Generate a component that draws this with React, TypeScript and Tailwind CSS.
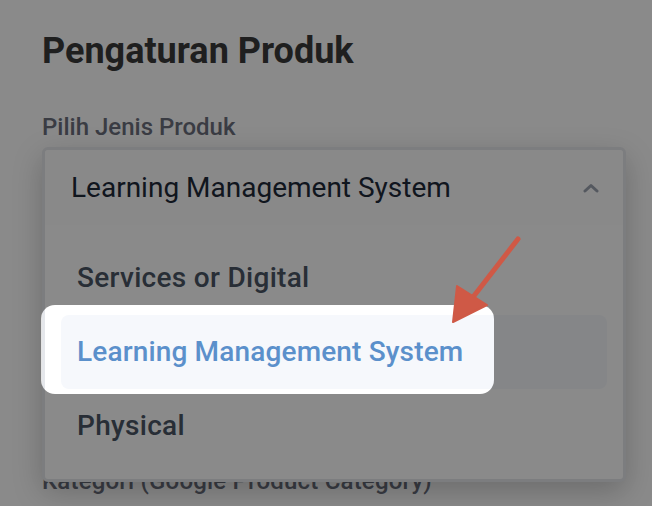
import React from 'react';

const options = ['Services or Digital', 'Learning Management System', 'Physical'];

export default function App() {
  const selected = 'Learning Management System';

  return (
    <div className="relative w-[652px] h-[506px] overflow-hidden bg-white font-[Roboto,sans-serif]">
      <div className="pl-[42px] pr-[26px] pt-[29px]">
        <h1 className="text-[36px] leading-[44px] font-bold text-[#3a3a3a]">Pengaturan Produk</h1>

        <label className="block mt-[40px] mb-[6px] text-[24px] leading-[28px] font-medium text-[#6b6f7d]">
          Pilih Jenis Produk
        </label>

        {/* select, opened */}
        <div className="relative h-[78px]">
          <div className="absolute inset-x-0 top-0 z-10 rounded-md border-[3px] border-gray-200 bg-white shadow-[0_10px_30px_rgba(0,0,0,0.22)]">
            <button className="flex w-full h-[75px] items-center justify-between pl-[26px] pr-[24px] bg-[#fdfdfe] rounded-t">
              <span className="text-[28px] text-gray-800">{selected}</span>
              <svg width="16" height="10" viewBox="0 0 16 10" fill="none">
                <path d="M2 8l6-5.5L14 8" stroke="#9ca3af" strokeWidth="3" strokeLinecap="round" strokeLinejoin="round" />
              </svg>
            </button>
            <ul className="py-4">
              {options.map((opt) => {
                const active = opt === selected;
                return (
                  <li
                    key={opt}
                    className={
                      active
                        ? 'relative mx-4 flex h-[74px] items-center rounded-lg bg-[#f6f8fc] px-4 text-[28px] tracking-[0.15px] font-medium text-[#5b90cb]'
                        : 'relative mx-4 flex h-[74px] items-center rounded-lg px-4 text-[28px] tracking-[0.3px] font-medium text-gray-600'
                    }
                  >
                    {opt}
                    {active && (
                      <span className="absolute left-[-20px] top-[-10px] bottom-[-5px] w-[453px] rounded-[14px] shadow-[0_0_0_9999px_rgba(0,0,0,0.46)] z-20 pointer-events-none" />
                    )}
                  </li>
                );
              })}
            </ul>
          </div>
        </div>

        <label className="block mt-[242px] text-[24px] leading-[28px] font-medium tracking-[0.2px] text-[#6b6f7d]">
          Kategori (Google Product Category)
        </label>
      </div>

      {/* annotation arrow */}
      <svg className="absolute left-0 top-0 z-30 pointer-events-none" width="652" height="506" viewBox="0 0 652 506">
        <line x1="518" y1="239" x2="470" y2="301" stroke="#cf5946" strokeWidth="5" strokeLinecap="round" />
        <polygon points="453,322 457,286 487,305" fill="#cf5946" stroke="#cf5946" strokeWidth="2" strokeLinejoin="round" />
      </svg>
    </div>
  );
}
